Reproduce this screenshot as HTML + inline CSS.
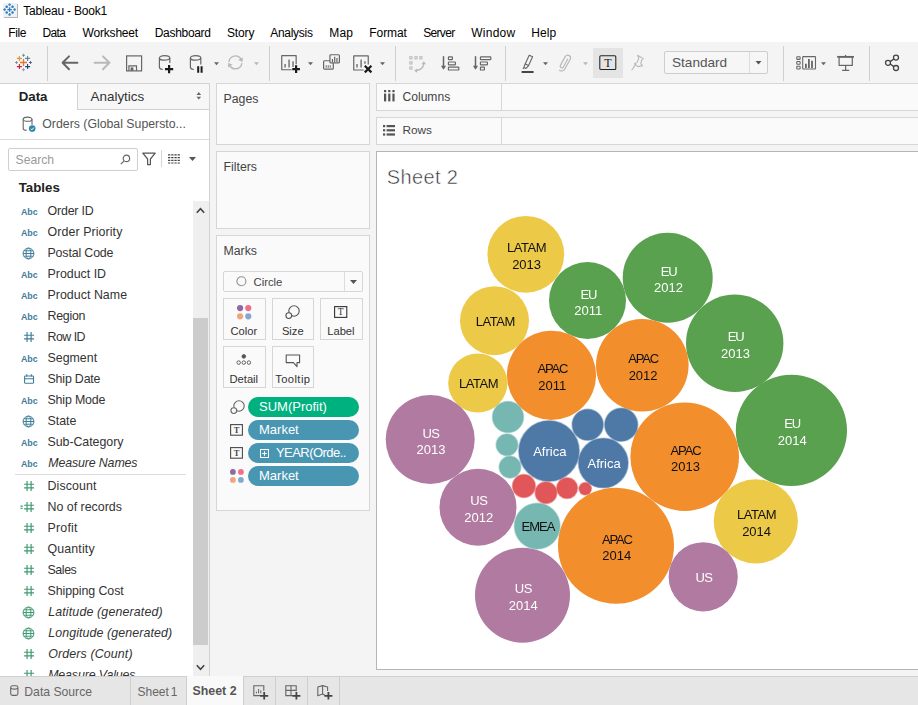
<!DOCTYPE html>
<html><head><meta charset="utf-8"><title>Tableau - Book1</title><style>
html,body{margin:0;padding:0}
body{width:918px;height:705px;overflow:hidden;background:#f4f4f4;font-family:"Liberation Sans",sans-serif;position:relative;color:#333}
.abs{position:absolute}
.t{position:absolute;white-space:nowrap;line-height:1}
svg{position:absolute;overflow:visible}
.card{position:absolute;background:#fafafa;border:1px solid #d6d6d6;box-sizing:border-box}
.btn{position:absolute;background:#fafafa;border:1px solid #d6d6d6;box-sizing:border-box}
.pill{position:absolute;height:20px;border-radius:10px;color:#fff;font-size:13px;line-height:20px;white-space:nowrap;box-sizing:border-box}
.row{position:absolute;left:0;width:193px;height:21px}
.row .lbl{position:absolute;left:47.5px;top:3.4px;font-size:12.4px;line-height:15px;white-space:nowrap;color:#333}
.row .abc{position:absolute;left:21px;top:6.4px;font-size:8.9px;line-height:10px;font-weight:bold;color:#3f7d9a;letter-spacing:-0.05px}
.vd{position:absolute;width:1px;background:#cfcfcf}
</style></head><body>
<div class="abs" style="left:0;top:0;width:918px;height:42px;background:#fff"></div>
<div class="abs" style="left:3px;top:3px;width:14px;height:14px;background:#f0f0f0;box-shadow:1px 1px 0 #b4b4b4"></div>
<svg style="left:3px;top:3px" width="13.2" height="13.2" viewBox="0 0 14 14"><g stroke="#2f7fc0" stroke-width="1.5" fill="none">
<path d="M7 4.6v4.8M4.6 7h4.8"/>
<path d="M7 0.4v2.6M5.7 1.7h2.6"/><path d="M7 11v2.6M5.7 12.3h2.6"/>
<path d="M1.7 5.7v2.6M0.4 7h2.6"/><path d="M12.3 5.7v2.6M11 7h2.6"/>
<path d="M3.9 2.6v2.6M2.6 3.9h2.6"/><path d="M10.1 2.6v2.6M8.8 3.9h2.6"/>
<path d="M3.9 8.8v2.6M2.6 10.1h2.6"/><path d="M10.1 8.8v2.6M8.8 10.1h2.6"/>
</g></svg>
<div class="t" style="left:23.3px;top:5px;font-size:12px;letter-spacing:-0.2px;color:#000">Tableau - Book1</div>
<div class="t" style="left:8.3px;top:27px;font-size:12px;letter-spacing:-0.4px;color:#000">File</div>
<div class="t" style="left:42.5px;top:27px;font-size:12px;letter-spacing:-0.63px;color:#000">Data</div>
<div class="t" style="left:82.5px;top:27px;font-size:12px;letter-spacing:-0.18px;color:#000">Worksheet</div>
<div class="t" style="left:154.7px;top:27px;font-size:12px;letter-spacing:-0.3px;color:#000">Dashboard</div>
<div class="t" style="left:227px;top:27px;font-size:12px;letter-spacing:-0.15px;color:#000">Story</div>
<div class="t" style="left:270.3px;top:27px;font-size:12px;letter-spacing:-0.3px;color:#000">Analysis</div>
<div class="t" style="left:329.3px;top:27px;font-size:12px;letter-spacing:0.1px;color:#000">Map</div>
<div class="t" style="left:369.3px;top:27px;font-size:12px;letter-spacing:-0.08px;color:#000">Format</div>
<div class="t" style="left:423.3px;top:27px;font-size:12px;letter-spacing:-0.7px;color:#000">Server</div>
<div class="t" style="left:471.3px;top:27px;font-size:12px;letter-spacing:0.24px;color:#000">Window</div>
<div class="t" style="left:531.3px;top:27px;font-size:12px;letter-spacing:0.07px;color:#000">Help</div>
<div class="abs" style="left:0;top:42px;width:918px;height:41px;background:#f4f4f4"></div>
<div class="vd" style="left:47px;top:46px;height:35px"></div>
<div class="vd" style="left:269px;top:46px;height:35px"></div>
<div class="vd" style="left:395px;top:46px;height:35px"></div>
<div class="vd" style="left:505px;top:46px;height:35px"></div>
<div class="vd" style="left:783px;top:46px;height:35px"></div>
<div class="vd" style="left:869px;top:46px;height:35px"></div>
<svg style="left:14px;top:53px" width="19" height="19" viewBox="0 0 19 19" fill="none">
<path d="M9.5 6v7M6 9.5h7" stroke="#e8762d" stroke-width="1.3"/>
<path d="M5.4 2.9v5M2.9 5.4h5" stroke="#eb9129" stroke-width="1.1"/>
<path d="M13.6 2.9v5M11.1 5.4h5" stroke="#59879b" stroke-width="1.1"/>
<path d="M5.4 11.1v5M2.9 13.6h5" stroke="#c72037" stroke-width="1.1"/>
<path d="M13.6 11.1v5M11.1 13.6h5" stroke="#1f457e" stroke-width="1.1"/>
<path d="M9.5 0.8v3M8 2.3h3" stroke="#5b9aa8" stroke-width="1"/>
<path d="M9.5 15.2v3M8 16.7h3" stroke="#8f9dc0" stroke-width="1"/>
<path d="M2.5 8v3M1 9.5h3" stroke="#7199a6" stroke-width="1"/>
<path d="M16.5 8v3M15 9.5h3" stroke="#5c6692" stroke-width="1"/>
</svg>
<svg style="left:60px;top:54px" width="20" height="18" viewBox="0 0 20 18" fill="none" stroke="#666" stroke-width="2" stroke-linecap="round" stroke-linejoin="round"><path d="M17.4 8.8H2.6M9 2.4L2.6 8.8L9 15.2"/></svg>
<svg style="left:92px;top:54px" width="20" height="18" viewBox="0 0 20 18" fill="none" stroke="#b9b9b9" stroke-width="2" stroke-linecap="round" stroke-linejoin="round"><path d="M2.6 8.8H17.4M11 2.4L17.4 8.8L11 15.2"/></svg>
<svg style="left:125px;top:55px" width="18" height="17" viewBox="0 0 18 17" fill="none" stroke="#666" stroke-width="1.2"><rect x="1.6" y="0.9" width="15" height="15"/><path d="M3.9 15.9V10.8h7.6v5.1"/><rect x="5.6" y="12.4" width="2.8" height="3.5" fill="#666" stroke="none"/></svg>
<svg style="left:158px;top:54px" width="18" height="20" viewBox="0 0 18 20" fill="none" stroke="#666" stroke-width="1.2">
<ellipse cx="6.6" cy="3.9" rx="5.2" ry="2.3"/><path d="M1.4 3.9v9.3c0 1.2 1.4 2 3.4 2.3M11.8 3.9v5"/>
<path d="M11.1 11v8.2M7 15.1h8.2" stroke="#1a1a1a" stroke-width="2.2"/></svg>
<svg style="left:189px;top:54px" width="18" height="20" viewBox="0 0 18 20" fill="none" stroke="#666" stroke-width="1.2">
<ellipse cx="6.6" cy="3.9" rx="5.2" ry="2.3"/><path d="M1.4 3.9v9.3c0 1.2 1.4 2 3.4 2.3M11.8 3.9v6.6"/>
<path d="M9.2 12.2v6.6M12.6 12.2v6.6" stroke="#1a1a1a" stroke-width="2"/></svg>
<svg style="left:214px;top:61.5px" width="5" height="4" viewBox="0 0 6 4"><path d="M0 0h6L3 3.6z" fill="#666"/></svg>
<svg style="left:227px;top:54px" width="18" height="18" viewBox="0 0 18 18" fill="none" stroke="#b9b9b9" stroke-width="1.3" stroke-linecap="round">
<path d="M1.9 7.4a6.6 6.6 0 0 1 12.2-2.2"/><path d="M15.9 3.4l-0.4 4.6-4.2-2z" fill="#b9b9b9" stroke="none"/>
<path d="M14.9 9.4a6.6 6.6 0 0 1-12.2 2.2"/><path d="M0.9 13.4l0.4-4.6 4.2 2z" fill="#b9b9b9" stroke="none"/></svg>
<svg style="left:254px;top:61.5px" width="5" height="4" viewBox="0 0 6 4"><path d="M0 0h6L3 3.6z" fill="#b9b9b9"/></svg>
<svg style="left:281px;top:55px" width="21" height="20" viewBox="0 0 21 20" fill="none" stroke="#666" stroke-width="1.2" stroke-linejoin="round">
<path d="M10.6 14.75H0.75V0.65h14.4v8.6"/><path d="M4.1 12.5V8.9M8.07 12.5V4.4M12.03 12V6.3" stroke="#777" stroke-width="1.5"/>
<path d="M15.1 10.3v7.7M11.25 14.15h7.7" stroke="#1a1a1a" stroke-width="2.2"/></svg>
<svg style="left:308px;top:61.5px" width="5" height="4" viewBox="0 0 6 4"><path d="M0 0h6L3 3.6z" fill="#666"/></svg>
<svg style="left:322px;top:54px" width="20" height="18" viewBox="0 0 20 18" fill="none" stroke="#666" stroke-width="1.2">
<rect x="1.6" y="6.75" width="9.7" height="8.45" rx="1"/><rect x="7.95" y="0.75" width="9.45" height="8.2" rx="1" fill="#f4f4f4"/>
<path d="M10.43 7.9V5M12.7 7.9V2.8M14.96 7.9V3.9" stroke-width="1.2"/><path d="M4.2 13.7v-2.4M6.24 13.7v-2.4M8.27 13.7v-2.4" stroke-width="1"/></svg>
<svg style="left:352px;top:55px" width="22" height="20" viewBox="0 0 22 20" fill="none" stroke="#666" stroke-width="1.2" stroke-linejoin="round">
<path d="M11.6 15H1.75V0.9h14.5v8.7"/><path d="M5 12.5V8.9M9.1 12.5V4.4M12.94 8.8V6.3" stroke="#777" stroke-width="1.5"/>
<path d="M12.8 10.8l6.6 6.6M19.4 10.8l-6.6 6.6" stroke="#1a1a1a" stroke-width="2.2"/></svg>
<svg style="left:380px;top:61.5px" width="5" height="4" viewBox="0 0 6 4"><path d="M0 0h6L3 3.6z" fill="#666"/></svg>
<svg style="left:408px;top:55px" width="20" height="19" viewBox="0 0 20 19" fill="none" stroke="#b9b9b9" stroke-width="1">
<rect x="1.8" y="1.7" width="2.2" height="2.2"/><rect x="6.9" y="1.7" width="2.2" height="2.2"/><rect x="11.8" y="1.7" width="2.2" height="2.2"/>
<rect x="1.8" y="6.8" width="2.2" height="2.2"/><rect x="1.8" y="11.9" width="2.2" height="2.2"/>
<path d="M8.6 15.5Q15 14.4 15.8 8.6" stroke-width="1.3"/><path d="M15.8 6.2l2.3 3.1h-4.6z" fill="#b9b9b9" stroke="none"/><path d="M6.1 15.7l3-2.1v4.1z" fill="#b9b9b9" stroke="none"/></svg>
<svg style="left:439px;top:55px" width="21" height="18" viewBox="0 0 21 18" fill="none" stroke="#666" stroke-width="1.2">
<path d="M4.5 1.2v12" stroke-width="1.5"/><path d="M1.9 10.8l2.6 4 2.6-4z" fill="#666" stroke="none"/>
<rect x="9.4" y="1.8" width="4" height="2.8" rx="0.6"/><rect x="9.4" y="7" width="7" height="2.8" rx="0.6"/><rect x="9.4" y="12.2" width="10.4" height="2.8" rx="0.6"/></svg>
<svg style="left:471px;top:55px" width="21" height="18" viewBox="0 0 21 18" fill="none" stroke="#666" stroke-width="1.2">
<path d="M4.5 1.2v12" stroke-width="1.5"/><path d="M1.9 10.8l2.6 4 2.6-4z" fill="#666" stroke="none"/>
<rect x="9.4" y="1.8" width="10.4" height="2.8" rx="0.6"/><rect x="9.4" y="7" width="7" height="2.8" rx="0.6"/><rect x="9.4" y="12.2" width="4" height="2.8" rx="0.6"/></svg>
<svg style="left:520px;top:53px" width="16" height="21" viewBox="0 0 16 21" fill="none" stroke="#666" stroke-width="1.1" stroke-linejoin="round">
<path d="M9.2 2.2l3.4 1.6-4 8.8-3.4-1.6z"/><path d="M5.2 11l-1.4 3.4 2.2 1 2.6-2.8"/><path d="M3.8 14.4l-0.8 1.6"/>
<path d="M1.6 19h12" stroke="#333" stroke-width="1.8"/></svg>
<svg style="left:543px;top:61.5px" width="5" height="4" viewBox="0 0 6 4"><path d="M0 0h6L3 3.6z" fill="#666"/></svg>
<svg style="left:557px;top:53px" width="16" height="20" viewBox="0 0 16 20" fill="none" stroke="#b9b9b9" stroke-width="1.2" stroke-linecap="round">
<path d="M10.6 6.2L6.4 14a1.7 1.7 0 0 1-3-1.6L8.2 3.6a2.8 2.8 0 0 1 5 2.6L8 15.8a3.9 3.9 0 0 1-5.4 1.6"/></svg>
<svg style="left:583px;top:61.5px" width="5" height="4" viewBox="0 0 6 4"><path d="M0 0h6L3 3.6z" fill="#b9b9b9"/></svg>
<div class="abs" style="left:593px;top:48px;width:30px;height:30px;background:#e4e4e4"></div>
<svg style="left:599px;top:55px" width="18" height="16" viewBox="0 0 18 16" fill="none"><rect x="0.8" y="0.8" width="16" height="13.6" rx="1" stroke="#222" stroke-width="1.05"/>
<text x="8.8" y="11.9" text-anchor="middle" font-family="Liberation Serif, serif" font-size="12" fill="#222">T</text></svg>
<svg style="left:630px;top:54px" width="16" height="18" viewBox="0 0 16 18" fill="none" stroke="#b9b9b9" stroke-width="1.1" stroke-linejoin="round">
<path d="M7.6 1.2l5.8 3.4-1.6 1-1 4 1.8 2.2-4.6 0.8-3.6-2.8 2.6-1.2 1.8-4.2z"/><path d="M5.8 10.4L1.6 16.2"/></svg>
<div class="abs" style="left:664px;top:51px;width:104px;height:23px;background:#f6f6f6;border:1px solid #cdcdcd;border-radius:2px;box-sizing:border-box"></div>
<div class="vd" style="left:749px;top:52px;height:21px;background:#dcdcdc"></div>
<div class="t" style="left:672px;top:55.5px;font-size:13.6px;color:#555">Standard</div>
<svg style="left:755px;top:61px" width="7" height="4" viewBox="0 0 6 4"><path d="M0 0h6L3 3.6z" fill="#555"/></svg>
<svg style="left:795px;top:54px" width="22" height="18" viewBox="0 0 22 18" fill="none" stroke="#666" stroke-width="1.1">
<rect x="1.8" y="2.7" width="3.3" height="2.7" rx="0.5"/><rect x="1.8" y="7.5" width="3.3" height="2.7" rx="0.5"/><rect x="1.8" y="12.3" width="3.3" height="2.7" rx="0.5"/>
<rect x="7.7" y="2.6" width="12.8" height="12.4" rx="0.6"/><path d="M10.9 14V9.8M13.9 14V5M17 14V6.8" stroke-width="1.8"/></svg>
<svg style="left:821px;top:61.5px" width="5" height="4" viewBox="0 0 6 4"><path d="M0 0h6L3 3.6z" fill="#666"/></svg>
<svg style="left:836px;top:54px" width="20" height="19" viewBox="0 0 20 19" fill="none" stroke="#666" stroke-width="1.2">
<path d="M1.1 2.8h16.9" stroke-width="1.7"/><path d="M9.5 0.8v1.6"/><rect x="3.1" y="3" width="13.2" height="8.4"/><path d="M9.6 11.4v4.9M6.1 16.3h7.1"/></svg>
<svg style="left:884px;top:54px" width="17" height="18" viewBox="0 0 17 18" fill="none" stroke="#444" stroke-width="1.3">
<circle cx="12" cy="3.6" r="2.5"/><circle cx="4" cy="8.8" r="2.5"/><circle cx="12" cy="14" r="2.5"/><path d="M6.2 7.6l3.6-2.6M6.2 10l3.6 2.6"/></svg>
<div class="abs" style="left:0;top:83px;width:210px;height:594px;background:#fff;border-right:1px solid #d2d2d2;border-top:1px solid #d2d2d2;box-sizing:border-box"></div>
<div class="abs" style="left:77px;top:84px;width:132px;height:26px;background:#f7f7f7;border-left:1px solid #d2d2d2;border-bottom:1px solid #d2d2d2;box-sizing:border-box"></div>
<div class="t" style="left:18.7px;top:90px;font-size:13.3px;font-weight:bold;color:#222">Data</div>
<div class="t" style="left:90.6px;top:90px;font-size:13.4px;color:#333">Analytics</div>
<svg style="left:195.7px;top:91.8px" width="5.6" height="7.6" viewBox="0 0 7 10"><path d="M3.5 0L6.6 3.8H0.4zM3.5 10L6.6 6.2H0.4z" fill="#5a6b7c"/></svg>
<svg style="left:22px;top:116px" width="14" height="17" viewBox="0 0 14 17" fill="none" stroke="#666" stroke-width="1.1"><ellipse cx="5.6" cy="3.2" rx="4.4" ry="2.1"/><path d="M1.2 3.2v9.2c0 1 1.4 1.8 3.4 2M10 3.2v5.6"/>
<circle cx="10.2" cy="12.6" r="3.3" fill="#2e86ab" stroke="none"/><path d="M8.6 12.7l1.2 1.2 2-2.3" stroke="#fff" stroke-width="1"/></svg>
<div class="t" style="left:42.3px;top:117.8px;font-size:12.3px;color:#555">Orders (Global Supersto...</div>
<div class="abs" style="left:0;top:139px;width:209px;height:1px;background:#dcdcdc"></div>
<div class="abs" style="left:8px;top:148px;width:130px;height:23px;border:1px solid #cfcfcf;border-radius:2px;box-sizing:border-box;background:#fff"></div>
<div class="t" style="left:15.5px;top:154.2px;font-size:12.2px;color:#9a9a9a">Search</div>
<svg style="left:120px;top:154px" width="11" height="11" viewBox="0 0 11 11" fill="none" stroke="#666" stroke-width="1.2"><circle cx="6.4" cy="4.4" r="3.2"/><path d="M4.2 6.8L0.8 10.2"/></svg>
<svg style="left:142px;top:152px" width="14" height="14" viewBox="0 0 14 14" fill="none" stroke="#555" stroke-width="1.2" stroke-linejoin="round"><path d="M0.8 1.2h12.4L8.4 7v5.6H5.6V7z"/></svg>
<div class="vd" style="left:161px;top:150px;height:17px;background:#d6d6d6"></div>
<svg style="left:168px;top:154px" width="12" height="10" viewBox="0 0 12 10" fill="none" stroke="#444" stroke-width="1.2" stroke-dasharray="2.3 0.9"><path d="M0 0.9h12M0 3.6h12M0 6.3h12M0 9h12"/></svg>
<svg style="left:189px;top:157px" width="7" height="4" viewBox="0 0 7 4"><path d="M0 0h7L3.5 4z" fill="#555"/></svg>
<div class="t" style="left:18.7px;top:180.9px;font-size:13.3px;font-weight:bold;color:#222">Tables</div>
<div class="abs" style="left:193px;top:201px;width:16px;height:476px;background:#efefef"></div>
<div class="abs" style="left:193px;top:318px;width:15px;height:327px;background:#cccccc"></div>
<svg style="left:196px;top:207px" width="9" height="7" viewBox="0 0 9 7" fill="none" stroke="#444" stroke-width="1.6"><path d="M0.8 5.8L4.5 1.6L8.2 5.8"/></svg>
<svg style="left:196px;top:664px" width="9" height="7" viewBox="0 0 9 7" fill="none" stroke="#444" stroke-width="1.6"><path d="M0.8 1.2L4.5 5.4L8.2 1.2"/></svg>
<div class="row" style="top:200.5px"><span class="abc">Abc</span><span class="lbl" style="letter-spacing:-0.17px;">Order ID</span></div>
<div class="row" style="top:221.5px"><span class="abc">Abc</span><span class="lbl" style="letter-spacing:0.09px;">Order Priority</span></div>
<div class="row" style="top:242.5px"><svg style="left:22px;top:4px" width="13" height="13" viewBox="0 0 13 13" fill="none" stroke="#3f7d9a" stroke-width="1"><circle cx="6.5" cy="6.5" r="5.4"/><ellipse cx="6.5" cy="6.5" rx="2.4" ry="5.4"/><path d="M1.1 6.5h10.8M1.8 3.8h9.4M1.8 9.2h9.4"/></svg><span class="lbl" style="letter-spacing:-0.15px;">Postal Code</span></div>
<div class="row" style="top:263.5px"><span class="abc">Abc</span><span class="lbl">Product ID</span></div>
<div class="row" style="top:284.5px"><span class="abc">Abc</span><span class="lbl" style="letter-spacing:0.03px;">Product Name</span></div>
<div class="row" style="top:305.5px"><span class="abc">Abc</span><span class="lbl" style="letter-spacing:-0.26px;">Region</span></div>
<div class="row" style="top:326.5px"><svg style="left:22.9px;top:4.5px" width="12" height="12" viewBox="0 0 13 13" fill="none" stroke="#3f7d9a" stroke-width="1.25"><path d="M4.4 1v11M8.8 1v11M1.2 4.6h10.8M1.2 8.6h10.8"/></svg><span class="lbl" style="letter-spacing:-0.52px;">Row ID</span></div>
<div class="row" style="top:347.5px"><span class="abc">Abc</span><span class="lbl">Segment</span></div>
<div class="row" style="top:368.5px"><svg style="left:23.9px;top:5.6px" width="11" height="11" viewBox="0 0 11 11" fill="none" stroke="#3f7d9a" stroke-width="1.1"><rect x="0.6" y="2" width="8.9" height="7.2" rx="0.8"/><path d="M0.6 4.7h8.9M2.7 0.3v2.3M7.4 0.3v2.3"/></svg><span class="lbl" style="letter-spacing:-0.175px;">Ship Date</span></div>
<div class="row" style="top:389.5px"><span class="abc">Abc</span><span class="lbl" style="letter-spacing:-0.16px;">Ship Mode</span></div>
<div class="row" style="top:410.5px"><svg style="left:22px;top:4px" width="13" height="13" viewBox="0 0 13 13" fill="none" stroke="#3f7d9a" stroke-width="1"><circle cx="6.5" cy="6.5" r="5.4"/><ellipse cx="6.5" cy="6.5" rx="2.4" ry="5.4"/><path d="M1.1 6.5h10.8M1.8 3.8h9.4M1.8 9.2h9.4"/></svg><span class="lbl">State</span></div>
<div class="row" style="top:431.5px"><span class="abc">Abc</span><span class="lbl" style="letter-spacing:-0.05px;">Sub-Category</span></div>
<div class="row" style="top:452.5px"><span class="abc">Abc</span><span class="lbl" style="font-style:italic;left:48.2px;letter-spacing:-0.13px;">Measure Names</span></div>
<div class="abs" style="left:15px;top:474px;width:171px;height:1px;background:#dcdcdc"></div>
<div class="row" style="top:475.5px"><svg style="left:22.9px;top:4.5px" width="12" height="12" viewBox="0 0 13 13" fill="none" stroke="#3d9970" stroke-width="1.25"><path d="M4.4 1v11M8.8 1v11M1.2 4.6h10.8M1.2 8.6h10.8"/></svg><span class="lbl" style="letter-spacing:0.09px;">Discount</span></div>
<div class="row" style="top:496.5px"><svg style="left:22.9px;top:4.5px" width="12" height="12" viewBox="0 0 13 13" fill="none" stroke="#3d9970" stroke-width="1.25"><path d="M4.4 1v11M8.8 1v11M1.2 4.6h10.8M1.2 8.6h10.8"/><path d="M-2.8 5.5h2.6M-2.8 7.9h2.6" stroke-width="1.2"/></svg><span class="lbl">No of records</span></div>
<div class="row" style="top:517.5px"><svg style="left:22.9px;top:4.5px" width="12" height="12" viewBox="0 0 13 13" fill="none" stroke="#3d9970" stroke-width="1.25"><path d="M4.4 1v11M8.8 1v11M1.2 4.6h10.8M1.2 8.6h10.8"/></svg><span class="lbl" style="letter-spacing:0.22px;">Profit</span></div>
<div class="row" style="top:538.5px"><svg style="left:22.9px;top:4.5px" width="12" height="12" viewBox="0 0 13 13" fill="none" stroke="#3d9970" stroke-width="1.25"><path d="M4.4 1v11M8.8 1v11M1.2 4.6h10.8M1.2 8.6h10.8"/></svg><span class="lbl" style="letter-spacing:0.14px;">Quantity</span></div>
<div class="row" style="top:559.5px"><svg style="left:22.9px;top:4.5px" width="12" height="12" viewBox="0 0 13 13" fill="none" stroke="#3d9970" stroke-width="1.25"><path d="M4.4 1v11M8.8 1v11M1.2 4.6h10.8M1.2 8.6h10.8"/></svg><span class="lbl" style="letter-spacing:-0.42px;">Sales</span></div>
<div class="row" style="top:580.5px"><svg style="left:22.9px;top:4.5px" width="12" height="12" viewBox="0 0 13 13" fill="none" stroke="#3d9970" stroke-width="1.25"><path d="M4.4 1v11M8.8 1v11M1.2 4.6h10.8M1.2 8.6h10.8"/></svg><span class="lbl" style="letter-spacing:-0.075px;">Shipping Cost</span></div>
<div class="row" style="top:601.5px"><svg style="left:22px;top:4px" width="13" height="13" viewBox="0 0 13 13" fill="none" stroke="#3d9970" stroke-width="1"><circle cx="6.5" cy="6.5" r="5.4"/><ellipse cx="6.5" cy="6.5" rx="2.4" ry="5.4"/><path d="M1.1 6.5h10.8M1.8 3.8h9.4M1.8 9.2h9.4"/></svg><span class="lbl" style="font-style:italic;left:48.2px;letter-spacing:0.15px;">Latitude (generated)</span></div>
<div class="row" style="top:622.5px"><svg style="left:22px;top:4px" width="13" height="13" viewBox="0 0 13 13" fill="none" stroke="#3d9970" stroke-width="1"><circle cx="6.5" cy="6.5" r="5.4"/><ellipse cx="6.5" cy="6.5" rx="2.4" ry="5.4"/><path d="M1.1 6.5h10.8M1.8 3.8h9.4M1.8 9.2h9.4"/></svg><span class="lbl" style="font-style:italic;left:48.2px;letter-spacing:0.105px;">Longitude (generated)</span></div>
<div class="row" style="top:643.5px"><svg style="left:22.9px;top:4.5px" width="12" height="12" viewBox="0 0 13 13" fill="none" stroke="#3d9970" stroke-width="1.25"><path d="M4.4 1v11M8.8 1v11M1.2 4.6h10.8M1.2 8.6h10.8"/></svg><span class="lbl" style="font-style:italic;left:48.2px;letter-spacing:0.13px;">Orders (Count)</span></div>
<div class="row" style="top:664.5px"><svg style="left:22.9px;top:4.5px" width="12" height="12" viewBox="0 0 13 13" fill="none" stroke="#3d9970" stroke-width="1.25"><path d="M4.4 1v11M8.8 1v11M1.2 4.6h10.8M1.2 8.6h10.8"/></svg><span class="lbl" style="font-style:italic;left:48.2px;letter-spacing:-0.14px;">Measure Values</span></div>
<div class="card" style="left:216px;top:83px;width:154px;height:62px"></div>
<div class="t" style="left:223.5px;top:92.8px;font-size:12.3px;color:#444">Pages</div>
<div class="card" style="left:216px;top:151px;width:154px;height:78px"></div>
<div class="t" style="left:223.5px;top:160.8px;font-size:12.3px;color:#444">Filters</div>
<div class="card" style="left:216px;top:235px;width:154px;height:276px"></div>
<div class="t" style="left:223.5px;top:244.8px;font-size:12.3px;color:#444">Marks</div>
<div class="btn" style="left:223px;top:271px;width:140px;height:21px;border-radius:2px"></div>
<div class="vd" style="left:344px;top:272px;height:19px;background:#dcdcdc"></div>
<svg style="left:236px;top:276px" width="11" height="11" viewBox="0 0 11 11" fill="none" stroke="#909090" stroke-width="1.1"><circle cx="5.4" cy="5.2" r="4.5"/></svg>
<div class="t" style="left:253.5px;top:277.1px;font-size:11.3px;color:#444">Circle</div>
<svg style="left:350px;top:280px" width="7" height="4" viewBox="0 0 7 4"><path d="M0 0h7L3.5 4z" fill="#555"/></svg>
<div class="btn" style="left:223px;top:298px;width:43px;height:42px"></div>
<div class="btn" style="left:272px;top:298px;width:42px;height:42px"></div>
<div class="btn" style="left:320px;top:298px;width:43px;height:42px"></div>
<div class="btn" style="left:223px;top:346px;width:43px;height:42px"></div>
<div class="btn" style="left:272px;top:346px;width:42px;height:42px"></div>
<svg style="left:236.70000000000002px;top:304.7px" width="14.399999999999999" height="14.399999999999999" viewBox="-3.1 -3.1 14.399999999999999 14.399999999999999"><circle cx="0" cy="0" r="3.1" fill="#8d6a9f"/><circle cx="8.2" cy="0" r="3.1" fill="#ef6f84"/><circle cx="0" cy="8.2" r="3.1" fill="#f0a57c"/><circle cx="8.2" cy="8.2" r="3.1" fill="#84a8d2"/></svg>
<svg style="left:285.3px;top:305px" width="16" height="15" viewBox="0 0 16 15" fill="none" stroke="#555" stroke-width="1.1"><circle cx="9" cy="6" r="5.2"/><circle cx="3.8" cy="10.6" r="2.9" fill="#fafafa"/></svg>
<svg style="left:334px;top:306px" width="13.4" height="12" viewBox="0 0 13.4 12" fill="none"><rect x="0.6" y="0.6" width="12.200000000000001" height="10.8" stroke="#333" stroke-width="1.1"/><text x="6.7" y="9.264" text-anchor="middle" font-family="Liberation Serif, serif" font-weight="normal" font-size="9.6" fill="#333">T</text></svg>
<svg style="left:236.3px;top:354.3px" width="16" height="12" viewBox="0 0 16 12" fill="none" stroke="#555" stroke-width="0.9"><circle cx="7.8" cy="2.4" r="1.8" fill="#555"/><circle cx="2.7" cy="8.6" r="1.75"/><circle cx="7.8" cy="8.6" r="1.75"/><circle cx="12.9" cy="8.6" r="1.75"/></svg>
<svg style="left:285.3px;top:354.2px" width="16" height="14" viewBox="0 0 16 14" fill="none" stroke="#555" stroke-width="1.1" stroke-linejoin="round"><path d="M1.2 1h13.4v7.6H12v4L8.4 8.6H1.2z"/></svg>
<div class="t" style="left:213.8px;width:60px;text-align:center;top:325.7px;font-size:11.2px;color:#333">Color</div>
<div class="t" style="left:262.8px;width:60px;text-align:center;top:325.7px;font-size:11.2px;color:#333">Size</div>
<div class="t" style="left:310.9px;width:60px;text-align:center;top:325.7px;font-size:11.2px;color:#333">Label</div>
<div class="t" style="left:213.8px;width:60px;text-align:center;top:373.7px;font-size:11.2px;color:#333">Detail</div>
<div class="t" style="left:262.8px;width:60px;text-align:center;top:373.7px;font-size:11.2px;color:#333;letter-spacing:0.42px">Tooltip</div>
<svg style="left:229.7px;top:399.8px" width="16" height="15" viewBox="0 0 16 15" fill="none" stroke="#666" stroke-width="1.1"><circle cx="9" cy="6" r="5.2"/><circle cx="3.8" cy="10.6" r="2.9" fill="#fafafa"/></svg>
<div class="pill" style="left:248px;top:397px;width:111px;background:#00b180;padding-left:11px">SUM(Profit)</div>
<svg style="left:230px;top:424px" width="13" height="11.8" viewBox="0 0 13 11.8" fill="none"><rect x="0.6" y="0.6" width="11.8" height="10.600000000000001" stroke="#4a4a4a" stroke-width="1.1"/><text x="6.5" y="8.824" text-anchor="middle" font-family="Liberation Serif, serif" font-weight="bold" font-size="8.6" fill="#4a4a4a">T</text></svg>
<div class="pill" style="left:248px;top:420px;width:111px;background:#4996b2;padding-left:11px">Market</div>
<svg style="left:230px;top:447px" width="13" height="11.8" viewBox="0 0 13 11.8" fill="none"><rect x="0.6" y="0.6" width="11.8" height="10.600000000000001" stroke="#4a4a4a" stroke-width="1.1"/><text x="6.5" y="8.824" text-anchor="middle" font-family="Liberation Serif, serif" font-weight="bold" font-size="8.6" fill="#4a4a4a">T</text></svg>
<div class="pill" style="left:248px;top:443px;width:111px;background:#4996b2;padding-left:28px;letter-spacing:-0.55px">YEAR(Orde..</div>
<svg style="left:260px;top:448.5px" width="9" height="9" viewBox="0 0 9 9" fill="none" stroke="#fff" stroke-width="1"><rect x="0.5" y="0.5" width="8" height="8"/><path d="M4.5 2.2v4.6M2.2 4.5h4.6"/></svg>
<svg style="left:230.0px;top:469.1px" width="13.8" height="13.8" viewBox="-2.9 -2.9 13.8 13.8"><circle cx="0" cy="0" r="2.9" fill="#8d6a9f"/><circle cx="8.0" cy="0" r="2.9" fill="#ef6f84"/><circle cx="0" cy="8.0" r="2.9" fill="#f0a57c"/><circle cx="8.0" cy="8.0" r="2.9" fill="#84a8d2"/></svg>
<div class="pill" style="left:248px;top:466px;width:111px;background:#4996b2;padding-left:11px">Market</div>
<div class="card" style="left:376px;top:83px;width:560px;height:28px"></div>
<div class="vd" style="left:501px;top:84px;height:26px;background:#d6d6d6"></div>
<div class="card" style="left:376px;top:117px;width:560px;height:28px"></div>
<div class="vd" style="left:501px;top:118px;height:26px;background:#d6d6d6"></div>
<svg style="left:384px;top:90px" width="11" height="12" viewBox="0 0 11 12" fill="#555"><rect x="0" y="0" width="2.2" height="2.2"/><rect x="4.2" y="0" width="2.2" height="2.2"/><rect x="8.4" y="0" width="2.2" height="2.2"/><rect x="0" y="3.6" width="2.2" height="7.8"/><rect x="4.2" y="3.6" width="2.2" height="7.8"/><rect x="8.4" y="3.6" width="2.2" height="7.8"/></svg>
<div class="t" style="left:402.5px;top:90.5px;font-size:12.1px;color:#444">Columns</div>
<svg style="left:383px;top:125px" width="12" height="11" viewBox="0 0 12 11" fill="#555"><rect x="0" y="0" width="2.2" height="2.2"/><rect x="0" y="4.2" width="2.2" height="2.2"/><rect x="0" y="8.4" width="2.2" height="2.2"/><rect x="3.6" y="0" width="8.4" height="2.2"/><rect x="3.6" y="4.2" width="8.4" height="2.2"/><rect x="3.6" y="8.4" width="8.4" height="2.2"/></svg>
<div class="t" style="left:402.5px;top:125.3px;font-size:11.8px;color:#444">Rows</div>
<div class="abs" style="left:376px;top:151px;width:560px;height:519px;background:#fff;border:1px solid #b5b5b5;box-sizing:border-box"></div>
<div class="t" style="left:386.8px;top:167px;font-size:20px;color:#333;letter-spacing:0.35px;-webkit-text-stroke:0.5px #fff">Sheet 2</div>
<svg style="left:377px;top:152px;will-change:transform;opacity:0.999" width="541" height="517" viewBox="377 152 541 517" font-family="Liberation Sans, sans-serif" font-size="13" text-anchor="middle"><circle cx="525.8" cy="254.3" r="38.4" fill="#edc948"/><circle cx="494.5" cy="320.7" r="34.5" fill="#edc948"/><circle cx="477.8" cy="383.0" r="29.6" fill="#edc948"/><circle cx="587.5" cy="300.5" r="38.5" fill="#59a14f"/><circle cx="667.7" cy="277.7" r="45.0" fill="#59a14f"/><circle cx="734.7" cy="343.2" r="48.7" fill="#59a14f"/><circle cx="791.4" cy="430.3" r="55.6" fill="#59a14f"/><circle cx="551.5" cy="375.3" r="44.6" fill="#f28e2b"/><circle cx="642.3" cy="365.3" r="46.3" fill="#f28e2b"/><circle cx="684.7" cy="456.7" r="54.3" fill="#f28e2b"/><circle cx="616.0" cy="545.7" r="58.0" fill="#f28e2b"/><circle cx="755.8" cy="521.3" r="42.1" fill="#edc948"/><circle cx="703.2" cy="576.8" r="34.6" fill="#b07aa1"/><circle cx="522.5" cy="595.2" r="47.5" fill="#b07aa1"/><circle cx="478.0" cy="507.2" r="38.5" fill="#b07aa1"/><circle cx="430.2" cy="439.5" r="44.5" fill="#b07aa1"/><circle cx="508.0" cy="417.0" r="15.5" fill="#76b7b2" stroke="#76b7b2" stroke-opacity="0.45" stroke-width="1.6"/><circle cx="507.0" cy="444.8" r="10.8" fill="#76b7b2" stroke="#76b7b2" stroke-opacity="0.45" stroke-width="1.6"/><circle cx="510.0" cy="467.1" r="10.8" fill="#76b7b2" stroke="#76b7b2" stroke-opacity="0.45" stroke-width="1.6"/><circle cx="537.2" cy="526.1" r="22.8" fill="#76b7b2" stroke="#76b7b2" stroke-opacity="0.45" stroke-width="1.6"/><circle cx="587.7" cy="424.7" r="15.5" fill="#4e79a7" stroke="#4e79a7" stroke-opacity="0.45" stroke-width="1.6"/><circle cx="621.2" cy="424.7" r="16.5" fill="#4e79a7" stroke="#4e79a7" stroke-opacity="0.45" stroke-width="1.6"/><circle cx="549.0" cy="451.0" r="30.2" fill="#4e79a7" stroke="#4e79a7" stroke-opacity="0.45" stroke-width="1.6"/><circle cx="603.3" cy="463.0" r="24.8" fill="#4e79a7" stroke="#4e79a7" stroke-opacity="0.45" stroke-width="1.6"/><circle cx="523.9" cy="486.0" r="11.4" fill="#e15759" stroke="#e15759" stroke-opacity="0.45" stroke-width="1.6"/><circle cx="546.0" cy="492.7" r="10.8" fill="#e15759" stroke="#e15759" stroke-opacity="0.45" stroke-width="1.6"/><circle cx="567.1" cy="488.1" r="10.4" fill="#e15759" stroke="#e15759" stroke-opacity="0.45" stroke-width="1.6"/><circle cx="585.2" cy="488.8" r="6.2" fill="#e15759" stroke="#e15759" stroke-opacity="0.45" stroke-width="1.6"/><text x="526.5999999999999" y="252.35000000000002" fill="#111" letter-spacing="-0.45">LATAM</text><text x="526.5999999999999" y="268.85" fill="#111">2013</text><text x="495.3" y="326.0" fill="#111" letter-spacing="-0.45">LATAM</text><text x="478.6" y="388.3" fill="#111" letter-spacing="-0.45">LATAM</text><text x="588.3" y="298.55" fill="#fff" letter-spacing="-1.2">EU</text><text x="588.3" y="315.05" fill="#fff">2011</text><text x="668.5" y="275.75" fill="#fff" letter-spacing="-1.2">EU</text><text x="668.5" y="292.25" fill="#fff">2012</text><text x="735.5" y="341.25" fill="#fff" letter-spacing="-1.2">EU</text><text x="735.5" y="357.75" fill="#fff">2013</text><text x="792.1999999999999" y="428.35" fill="#fff" letter-spacing="-1.2">EU</text><text x="792.1999999999999" y="444.85" fill="#fff">2014</text><text x="552.3" y="373.35" fill="#111" letter-spacing="-1.15">APAC</text><text x="552.3" y="389.85" fill="#111">2011</text><text x="643.0999999999999" y="363.35" fill="#111" letter-spacing="-1.15">APAC</text><text x="643.0999999999999" y="379.85" fill="#111">2012</text><text x="685.5" y="454.75" fill="#111" letter-spacing="-1.15">APAC</text><text x="685.5" y="471.25" fill="#111">2013</text><text x="616.8" y="543.75" fill="#111" letter-spacing="-1.15">APAC</text><text x="616.8" y="560.25" fill="#111">2014</text><text x="756.5999999999999" y="519.3499999999999" fill="#111" letter-spacing="-0.45">LATAM</text><text x="756.5999999999999" y="535.8499999999999" fill="#111">2014</text><text x="704.0" y="582.0999999999999" fill="#fff" letter-spacing="-0.5">US</text><text x="523.3" y="593.25" fill="#fff" letter-spacing="-0.5">US</text><text x="523.3" y="609.75" fill="#fff">2014</text><text x="478.8" y="505.25" fill="#fff" letter-spacing="-0.5">US</text><text x="478.8" y="521.75" fill="#fff">2012</text><text x="431.0" y="437.55" fill="#fff" letter-spacing="-0.5">US</text><text x="431.0" y="454.05" fill="#fff">2013</text><text x="538.0" y="531.4" fill="#111" letter-spacing="-0.9">EMEA</text><text x="549.8" y="456.3" fill="#fff">Africa</text><text x="604.0999999999999" y="468.3" fill="#fff">Africa</text></svg>
<div class="abs" style="left:0;top:676px;width:918px;height:29px;background:#e6e6e6;border-top:1px solid #d0d0d0;box-sizing:border-box"></div>
<svg style="left:9.7px;top:684.9px" width="9" height="12" viewBox="0 0 9 12" fill="none" stroke="#666" stroke-width="1.1"><rect x="0.7" y="0.8" width="7.2" height="9.6" rx="1.8"/><path d="M0.7 3.2c1.8 0.9 5.4 0.9 7.2 0"/></svg>
<div class="t" style="left:24.3px;top:686.2px;font-size:12.2px;color:#666">Data Source</div>
<div class="vd" style="left:130px;top:677px;height:28px;background:#cfcfcf"></div>
<div class="t" style="left:137.5px;top:686.2px;font-size:12px;word-spacing:-1.4px;color:#666">Sheet 1</div>
<div class="abs" style="left:186px;top:676px;width:58px;height:29px;background:#f9f9f9;border-left:1px solid #cfcfcf;border-right:1px solid #cfcfcf;box-sizing:border-box"></div>
<div class="t" style="left:192.5px;top:684.5px;font-size:12.4px;font-weight:bold;color:#555">Sheet 2</div>
<div class="vd" style="left:275px;top:677px;height:28px;background:#cfcfcf"></div>
<div class="vd" style="left:307px;top:677px;height:28px;background:#cfcfcf"></div>
<div class="vd" style="left:339px;top:677px;height:28px;background:#cfcfcf"></div>
<svg style="left:253px;top:685px" width="16" height="15" viewBox="0 0 16 15" fill="none" stroke="#666" stroke-width="1.1"><path d="M8 10.6H0.8V0.8h10v5"/><path d="M3.4 8.4V6.6M5.6 8.4V4M7.8 8.4V5.4" stroke-width="1"/><path d="M11.2 7v7.6M7.2 10.8h8" stroke="#444" stroke-width="1.8"/></svg>
<svg style="left:284.6px;top:685px" width="16" height="15" viewBox="0 0 16 15" fill="none" stroke="#666" stroke-width="1.1"><path d="M8 10.6H0.8V0.8h10.4v5.4"/><path d="M0.8 5.4h10.4M6 0.8v9.8"/><path d="M11.4 7v7.6M7.4 10.8h8" stroke="#444" stroke-width="1.8"/></svg>
<svg style="left:317px;top:685px" width="16" height="15" viewBox="0 0 16 15" fill="none" stroke="#666" stroke-width="1.1" stroke-linejoin="round"><path d="M8 10.2L5.6 9 0.8 10.8V2L5.6 0.6 10.6 2v4"/><path d="M5.6 0.6V9"/><path d="M11.4 7v7.6M7.4 10.8h8" stroke="#444" stroke-width="1.8"/></svg>
</body></html>
